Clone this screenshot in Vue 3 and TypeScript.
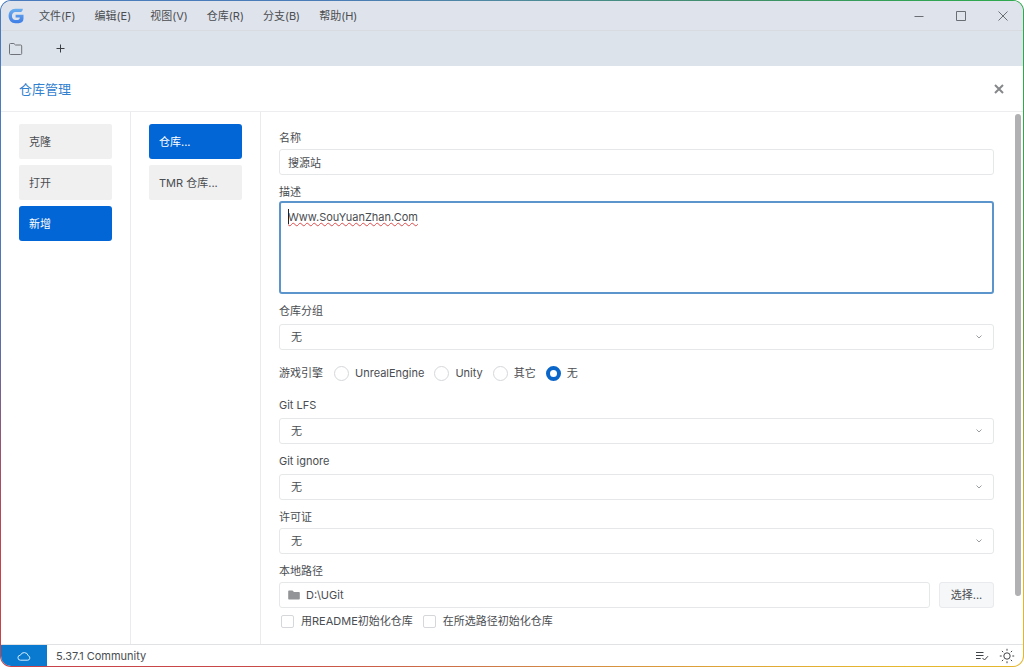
<script setup lang="ts">
import { ref } from 'vue'

const menus = ['文件(F)', '编辑(E)', '视图(V)', '仓库(R)', '分支(B)', '帮助(H)']
const actions = ['克隆', '打开', '新增']
const kinds = ['仓库...', 'TMR 仓库...']
const engines = ['UnrealEngine', 'Unity', '其它', '无']

const action = ref('新增')
const kind = ref('仓库...')
const engine = ref('无')
const name = ref('搜源站')
const description = ref('Www.SouYuanZhan.Com')
const path = ref('D:\\UGit')
const group = ref('无')
const lfs = ref('无')
const ignore = ref('无')
const license = ref('无')
const withReadme = ref(false)
const inPlace = ref(false)
</script>

<template>
  <div class="frame">
    <div class="window">
      <header class="menubar">
        <svg class="logo" viewBox="0 0 16 16" aria-hidden="true">
          <defs>
            <linearGradient id="logo-fill" x1="0" y1="0" x2="0" y2="1">
              <stop offset="0" stop-color="#6aaef0" />
              <stop offset="1" stop-color="#3f7de6" />
            </linearGradient>
          </defs>
          <path
            d="M14.8 .8H7.400C3.400 .8 .6 3.900 .6 8s2.800 7.200 6.800 7.200h3.200c3 0 4.900-1.800 4.900-4.700V6.700H7.600v2.800h4.200c0 1.600-.8 2.500-2.300 2.500H7.500C5.200 12 3.900 10.300 3.900 8s1.400-4 3.600-4h5c1.500 0 2.300-1.400 2.300-3.200z"
            fill="url(#logo-fill)"
          />
        </svg>
        <nav class="menus">
          <button v-for="m in menus" :key="m" type="button">{{ m }}</button>
        </nav>
        <div class="controls">
          <button type="button" aria-label="最小化">
            <svg viewBox="0 0 12 12"><path d="M1.500 6.500h9" /></svg>
          </button>
          <button type="button" aria-label="最大化">
            <svg viewBox="0 0 12 12"><path d="M1.500 1.500h9v9h-9z" /></svg>
          </button>
          <button type="button" aria-label="关闭窗口">
            <svg viewBox="0 0 12 12"><path d="M1.500 1.500l9 9M10.500 1.500l-9 9" /></svg>
          </button>
        </div>
      </header>

      <div class="tabs">
        <button type="button" aria-label="仓库">
          <svg viewBox="0 0 14 12" width="14" height="12">
            <path d="M1.500 .500h3.400l1.600 1.500h5.200q1 0 1 1v7.500q0 1-1 1H1.500q-1 0-1-1V1.500q0-1 1-1z" />
          </svg>
        </button>
        <button type="button" aria-label="新建标签">
          <svg class="plus" viewBox="0 0 9 9" width="9" height="9"><path d="M4.500 .500v8M.500 4.500h8" /></svg>
        </button>
      </div>

      <div class="heading">
        <h1>仓库管理</h1>
        <button type="button" aria-label="关闭">
          <svg viewBox="0 0 10 10" width="10" height="10"><path d="M1 1l8 8M9 1L1 9" /></svg>
        </button>
      </div>

      <main class="body">
        <nav class="side">
          <button
            v-for="a in actions"
            :key="a"
            type="button"
            :class="{ active: a === action }"
            @click="action = a"
          >{{ a }}</button>
        </nav>
        <nav class="side">
          <button
            v-for="k in kinds"
            :key="k"
            type="button"
            :class="{ active: k === kind }"
            @click="kind = k"
          >{{ k }}</button>
        </nav>

        <form class="form" @submit.prevent>
          <div class="field">
            <label for="name">名称</label>
            <input id="name" v-model="name" class="box" type="text" />
          </div>
          <div class="field snug">
            <label for="description">描述</label>
            <div class="area">
              <textarea id="description" v-model="description"></textarea>
              <span class="caret" aria-hidden="true"></span>
            </div>
          </div>
          <div class="field roomy">
            <label for="group">仓库分组</label>
            <div class="select">
              <select id="group" v-model="group" class="box"><option>无</option></select>
              <svg viewBox="0 0 8 6"><path d="M1.500 1.500L4 4l2.500-2.500" /></svg>
            </div>
          </div>

          <fieldset class="engines">
            <legend>游戏引擎</legend>
            <span class="caption" aria-hidden="true">游戏引擎</span>
            <label v-for="e in engines" :key="e">
              <input v-model="engine" type="radio" name="engine" :value="e" />{{ e }}
            </label>
          </fieldset>

          <div class="field roomy">
            <label for="lfs">Git LFS</label>
            <div class="select">
              <select id="lfs" v-model="lfs" class="box"><option>无</option></select>
              <svg viewBox="0 0 8 6"><path d="M1.500 1.500L4 4l2.500-2.500" /></svg>
            </div>
          </div>
          <div class="field roomy">
            <label for="ignore">Git ignore</label>
            <div class="select">
              <select id="ignore" v-model="ignore" class="box"><option>无</option></select>
              <svg viewBox="0 0 8 6"><path d="M1.500 1.500L4 4l2.500-2.500" /></svg>
            </div>
          </div>
          <div class="field">
            <label for="license">许可证</label>
            <div class="select">
              <select id="license" v-model="license" class="box"><option>无</option></select>
              <svg viewBox="0 0 8 6"><path d="M1.500 1.500L4 4l2.500-2.500" /></svg>
            </div>
          </div>
          <div class="field">
            <label for="path">本地路径</label>
            <div class="path-row">
              <div class="box path">
                <svg viewBox="0 0 12 10" width="12" height="10" aria-hidden="true">
                  <path d="M1 .500h3.500L6 2h5q.800 0 .800.800v5.900q0 .800-.800.800H1q-.800 0-.800-.800V1.300Q.200.500 1 .500z" />
                </svg>
                <input id="path" v-model="path" type="text" />
              </div>
              <button type="button" class="browse">选择...</button>
            </div>
          </div>
          <div class="checks">
            <label><input v-model="withReadme" type="checkbox" />用README初始化仓库</label>
            <label><input v-model="inPlace" type="checkbox" />在所选路径初始化仓库</label>
          </div>
        </form>
        <div class="track" aria-hidden="true"><div class="thumb"></div></div>
      </main>

      <footer class="status">
        <button type="button" class="cloud" aria-label="云同步">
          <svg viewBox="0 0 14 10" width="14" height="10">
            <path d="M3.500 9.200h7.200a2.300 2.300 0 0 0 .500-4.500A4.100 4.100 0 0 0 3.400 4.200a2.500 2.500 0 0 0 .100 5z" />
          </svg>
        </button>
        <span class="version">5.37.1 Community</span>
        <button type="button" class="tool" aria-label="任务">
          <svg viewBox="0 0 14 10" width="14" height="10">
            <path d="M1 1.500h7.500M1 4.500h7.500M1 7.500h4.700M7.500 7l2 2L13 5.200" />
          </svg>
        </button>
        <button type="button" class="tool" aria-label="主题">
          <svg viewBox="0 0 16 16" width="16" height="16">
            <circle cx="8" cy="8" r="3.200" />
            <path d="M8 .800v1.900M8 13.300v1.900M.800 8h1.900M13.300 8h1.900M2.900 2.900l1.300 1.300M11.800 11.800l1.300 1.300M2.900 13.100l1.300-1.300M11.800 4.200l1.300-1.300" />
          </svg>
        </button>
      </footer>
    </div>
  </div>
</template>

<style>
body {
  background: #fff;
}
</style>

<style scoped>
* {
  box-sizing: border-box;
}

.frame {
  height: 100vh;
  padding: 1px;
  border-radius: 11px;
  background: conic-gradient(#4f8a9e 0deg, #3f8f68 35deg, #2fa84f 55deg, #35a84a 70deg, #6c9a3c 90deg, #e0b42c 115deg, #e6b830 130deg, #cf7f48 180deg, #c84848 220deg, #c9404a 245deg, #a0506a 256deg, #5f6ca8 268deg, #4a7cc0 285deg, #4a7cb8 330deg, #4f8a9e 360deg);
  font: 11px/16px Inter, "Noto Sans CJK SC", sans-serif;
  color: #4a4d51;
}

.window {
  display: flex;
  flex-direction: column;
  height: 100%;
  overflow: hidden;
  border-radius: 10px;
  background: #fff;
}

button,
input,
select,
textarea {
  margin: 0;
  font: inherit;
  color: inherit;
}

button {
  padding: 0;
  border: 0;
  background: none;
}

svg {
  display: block;
  fill: none;
  stroke: currentColor;
}

.menubar {
  display: flex;
  align-items: center;
  height: 30px;
  flex: none;
  padding: 0 8px 0 7px;
  border-bottom: 1px solid #d8dbe0;
  background: #dfe3eb;
}

.logo {
  width: 16px;
  height: 16px;
  stroke: none;
}

.menus {
  display: flex;
  gap: 19px;
  flex: 1;
  margin-left: 15px;
}

.controls {
  display: flex;
  gap: 18px;
  color: #6a6d73;
}

.controls button {
  display: grid;
  place-items: center;
  width: 24px;
  height: 24px;
}

.controls svg {
  width: 12px;
  height: 12px;
}

.tabs {
  display: flex;
  align-items: center;
  gap: 33px;
  height: 35px;
  flex: none;
  padding: 0 8px;
  background: #dde3eb;
  color: #6f7379;
}

.plus {
  color: #3b3e43;
}

.heading {
  display: flex;
  align-items: center;
  justify-content: space-between;
  height: 46px;
  flex: none;
  padding: 0 19px 0 18px;
  border-bottom: 1px solid #ededef;
}

.heading h1 {
  margin: 0;
  font-size: 13px;
  font-weight: 400;
  line-height: 20px;
  color: #3180cf;
}

.heading svg {
  color: #85878a;
  stroke-width: 2;
}

.body {
  display: flex;
  flex: 1;
  min-height: 0;
}

.side {
  display: flex;
  flex-direction: column;
  gap: 6px;
  flex: none;
  width: 130px;
  padding: 12px 18px;
  border-right: 1px solid #ebebed;
}

.side button {
  height: 35px;
  padding: 0 10px;
  border-radius: 2px;
  background: #f0f0f0;
  text-align: left;
}

.side button.active {
  border-radius: 3px;
  background: #0366d6;
  color: #fff;
}

.form {
  display: flex;
  flex-direction: column;
  gap: 9px;
  flex: 1;
  min-width: 0;
  overflow: hidden;
  padding: 18px 21px 0 18px;
}

.field {
  display: flex;
  flex-direction: column;
  gap: 3px;
}

.field.snug {
  gap: 1px;
}

.field.roomy {
  gap: 5px;
}

.box {
  display: block;
  width: 100%;
  height: 26px;
  padding: 0 8px;
  border: 1px solid #e6e7e9;
  border-radius: 3px;
  background: #fff;
}

.area {
  position: relative;
}

.area textarea {
  display: block;
  width: 100%;
  height: 93px;
  padding: 6px 7px;
  border: 2px solid #5c95cb;
  border-radius: 3px;
  outline: 0;
  resize: none;
  text-decoration: underline wavy #df4a4a 1px;
}

.caret {
  position: absolute;
  top: 8px;
  left: 9px;
  width: 1px;
  height: 15px;
  background: #222;
}

.select {
  position: relative;
}

.select select {
  padding: 0 11px;
  appearance: none;
}

.select svg {
  position: absolute;
  top: 10px;
  right: 11px;
  width: 8px;
  height: 6px;
  color: #9b9da0;
  pointer-events: none;
}

.engines {
  display: flex;
  align-items: center;
  gap: 10px;
  min-width: 0;
  height: 16px;
  margin: 6px 0 7px;
  padding: 0;
  border: 0;
}

.engines legend {
  display: none;
}

.caption {
  min-width: 45px;
}

.engines label,
.checks label {
  display: flex;
  align-items: center;
  gap: 6px;
}

.engines input,
.checks input {
  flex: none;
  appearance: none;
  border: 1px solid #d5d7da;
  background: #fff;
}

.engines input {
  width: 15px;
  height: 15px;
  border-radius: 50%;
}

.engines input:checked {
  border: 4px solid #0a66c8;
}

.path-row {
  display: flex;
  gap: 9px;
}

.path {
  display: flex;
  align-items: center;
  gap: 6px;
  flex: 1;
}

.path svg {
  fill: #929497;
  stroke: none;
}

.path input {
  flex: 1;
  min-width: 0;
  padding: 0;
  border: 0;
  outline: 0;
  background: none;
}

.browse {
  flex: none;
  width: 55px;
  border: 1px solid #e9eaed;
  border-radius: 3px;
  background: #f6f7f9;
}

.checks {
  display: flex;
  gap: 10px;
  margin-top: -4px;
  padding-left: 2px;
}

.checks label {
  gap: 7px;
}

.checks input {
  width: 13px;
  height: 13px;
  border-radius: 2px;
}

.track {
  flex: none;
  width: 8px;
  padding-top: 2px;
}

.thumb {
  width: 6px;
  height: 91%;
  border-radius: 3px;
  background: #b1b1b3;
}

.status {
  display: flex;
  align-items: center;
  height: 22px;
  flex: none;
  padding-right: 8px;
  border-top: 1px solid #e1e2e4;
}

.cloud {
  display: grid;
  place-items: center;
  align-self: stretch;
  width: 46px;
  background: #0a7ad1;
  color: #d3ecff;
}

.version {
  flex: 1;
  margin-left: 9px;
}

.tool {
  margin-left: 10px;
  color: #3f4247;
}
</style>
